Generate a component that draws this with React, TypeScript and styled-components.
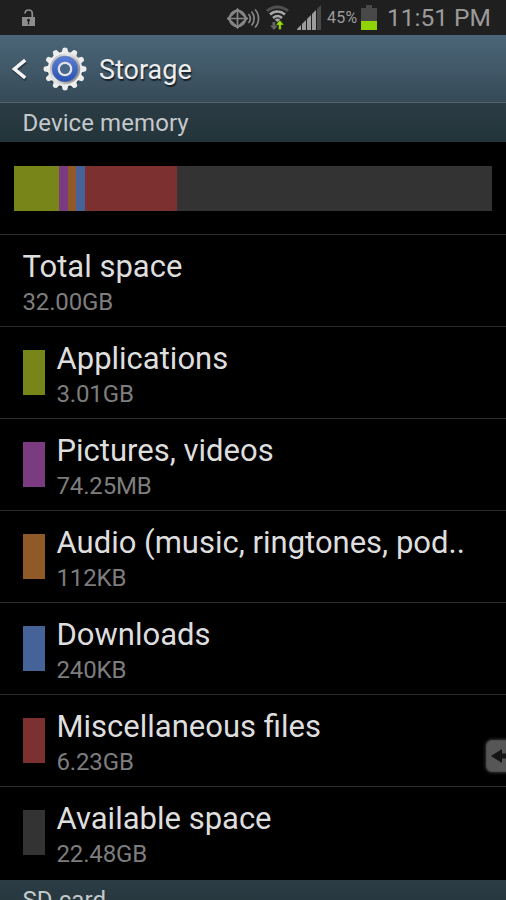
import React from 'react';
import styled, { createGlobalStyle } from 'styled-components';

const GlobalStyle = createGlobalStyle`
  * { box-sizing: border-box; }
  html, body { margin: 0; background: #000; }
  body { overflow: hidden; font-family: Roboto, 'Liberation Sans', sans-serif; }
  svg { display: block; flex: none; }
`;

const Screen = styled.main`
  position: relative;
  width: 506px;
  height: 900px;
  overflow: hidden;
  background: #000;
  display: flex;
  flex-direction: column;
`;

const StatusBar = styled.header`
  flex: none;
  height: 35px;
  padding: 0 14px 0 22px;
  background: #1f1f1f;
  display: flex;
  align-items: center;
  justify-content: space-between;
  color: #9b9b9b;
`;

const StatusIcons = styled.div`
  display: flex;
  align-items: center;
`;

const Percent = styled.span`
  width: 31px;
  margin: 1px 3px 0 5px;
  font-size: 16px;
  line-height: 20px;
  letter-spacing: 0.2px;
  white-space: nowrap;
`;

const Clock = styled.span`
  width: 105px;
  margin-left: 10px;
  font-size: 24.5px;
  line-height: 34px;
  white-space: nowrap;
`;

const WifiGap = styled.div`
  margin: 0 8px 0 6px;
`;

const TitleBar = styled.div`
  flex: none;
  height: 68px;
  padding: 2px 0 0 12px;
  display: flex;
  align-items: center;
  background: linear-gradient(#4b6678, #364a58);
  border-bottom: 1px solid #52636c;
`;

const GearGap = styled.div`
  margin-left: 15px;
`;

const Title = styled.h1`
  margin: 1px 0 0 12px;
  font-size: 27px;
  line-height: 36px;
  font-weight: 400;
  color: #ededed;
  text-shadow: 1px 2px 1px rgba(0, 0, 0, 0.6);
`;

const SectionHeader = styled.h2`
  flex: none;
  margin: 0;
  height: 39px;
  padding-left: 22.5px;
  font-size: 24px;
  line-height: 41px;
  font-weight: 400;
  letter-spacing: 0.08px;
  color: #c3c8ca;
  background: linear-gradient(#2c3c45, #22343a);
`;

const UsagePanel = styled.section`
  flex: none;
  height: 93px;
  padding: 24px 14px 0;
  border-bottom: 1px solid #2b2b2b;
`;

const UsageBar = styled.div`
  height: 45px;
  display: flex;
  background: #333;
`;

const Segment = styled.div<{ $width: number; $color: string }>`
  width: ${(p) => p.$width}px;
  background: ${(p) => p.$color};
`;

const List = styled.ul`
  flex: none;
  margin: 0;
  padding: 0;
  list-style: none;
  height: 645px;
`;

const Row = styled.li`
  height: 92px;
  padding: 14px 0 0 22.5px;
  display: flex;
  border-bottom: 1px solid #2b2b2b;
  &:last-child { border-bottom: 0; }
`;

const Swatch = styled.div<{ $color: string }>`
  width: 22.5px;
  height: 45px;
  margin: 9px 11.5px 0 0;
  background: ${(p) => p.$color};
`;

const Label = styled.div`
  font-size: 31px;
  line-height: 36px;
  white-space: nowrap;
  color: #dedede;
`;

const Value = styled.div`
  font-size: 24px;
  line-height: 34px;
  letter-spacing: -0.15px;
  color: #7d7d7d;
`;

const SideTab = styled.button`
  position: absolute;
  right: -12px;
  top: 740px;
  width: 32px;
  height: 32px;
  padding: 0 0 0 4px;
  display: flex;
  align-items: center;
  border: 1px solid #4b4b4b;
  border-radius: 6px;
  background: #565656;
  box-shadow: 0 0 3px 1px #333;
`;

const LockIcon = () => (
  <svg width="14" height="18" viewBox="0 0 14 18">
    <path d="M3 4.5C3 2.2 4.4 1 6.6 1C8.8 1 10.3 2.2 10.3 4.8V9" fill="none" stroke="#8d8d8d" strokeWidth="1.7" />
    <rect x="0" y="8" width="13" height="9" fill="#8d8d8d" />
    <circle cx="6.5" cy="11.2" r="1.4" fill="#1f1f1f" />
    <path d="M6.5 11.5V15.5" stroke="#1f1f1f" strokeWidth="1.3" />
  </svg>
);

const NfcIcon = () => (
  <svg width="33" height="24" viewBox="0 0 33 24" fill="none" stroke="#868686">
    <path d="M1 12.5L10.5 3.5L20 12.5L10.5 21.5Z" strokeWidth="2" />
    <circle cx="10.5" cy="12.5" r="8" strokeWidth="1.8" />
    <path d="M1 12.5H20M10.5 3V22" strokeWidth="1.7" />
    <path d="M21.5 8C23.8 10.7 23.8 14.3 21.5 17M24.5 5.5C28 9.5 28 15.5 24.5 19.5M28 3.5C32.7 8.5 32.7 16.5 28 21.5" strokeWidth="1.7" />
  </svg>
);

const WifiIcon = () => (
  <svg width="23" height="26" viewBox="0 0 23 26" fill="none">
    <path d="M1 6C7 0.5 16 0.5 22 6" stroke="#505050" strokeWidth="3" />
    <path d="M4 9.5C8.5 5.5 14.5 5.5 19 9.5M7 13C10 10.3 13 10.3 16 13" stroke="#a6a6a6" strokeWidth="2.5" />
    <path d="M8.7 14.5Q11.5 12.7 14.3 14.5L11.5 17.3Z" fill="#a6a6a6" />
    <path d="M6.5 17V20.5H4L8 25L12 20.5H9.3V17Z" fill="#646464" />
    <path d="M12.6 24.5V20H9.8L13.8 15L18 20H15.2V24.5Z" fill="#99dc0b" stroke="#1f1f1f" strokeWidth="0.4" />
  </svg>
);

const SignalIcon = () => (
  <svg width="25" height="25" viewBox="0 0 25 25">
    <path d="M0 25V24L4 20V25ZM5 25V19L9 15V25ZM10 25V14L14 10V25ZM15 25V9L19 5V25Z" fill="#9c9c9c" />
    <path d="M20 25V4L24 0V25Z" fill="#494949" />
  </svg>
);

const BatteryIcon = () => (
  <svg width="16" height="25" viewBox="0 0 16 25">
    <path d="M0 3H5V0H11V3H16V16H0Z" fill="#494949" />
    <rect y="16" width="16" height="9" fill="#90d300" />
  </svg>
);

const BackIcon = () => (
  <svg width="16" height="24" viewBox="0 0 16 24">
    <path d="M14 4L2.8 13L14 22" stroke="#17252e" strokeWidth="3.4" fill="none" opacity="0.6" />
    <path d="M13.2 2.2L2.4 11L13.2 19.8" stroke="#f4f4f4" strokeWidth="3.5" fill="none" />
  </svg>
);

const GearIcon = () => (
  <svg width="44" height="46" viewBox="-22 -22 44 46">
    <defs>
      <linearGradient id="metal" x1="0" y1="0" x2="1" y2="1">
        <stop offset="0" stopColor="#fff" />
        <stop offset="0.5" stopColor="#dedede" />
        <stop offset="1" stopColor="#f7f7f7" />
      </linearGradient>
      <linearGradient id="ring" x1="0" y1="0" x2="1" y2="0.5">
        <stop offset="0" stopColor="#a9a9a9" />
        <stop offset="0.5" stopColor="#e9e9e9" />
        <stop offset="1" stopColor="#979797" />
      </linearGradient>
      <linearGradient id="blue" x1="0" y1="0" x2="0" y2="1">
        <stop offset="0" stopColor="#5b80d6" />
        <stop offset="1" stopColor="#2850b0" />
      </linearGradient>
    </defs>
    <circle cy="1.5" r="18" fill="#1d2c38" opacity="0.5" />
    {Array.from({ length: 12 }, (_, i) => (
      <path key={i} d="M-3.6 -16L-2.2 -20.8Q0 -22.2 2.2 -20.8L3.6 -16Z" fill="#ededed" transform={`rotate(${i * 30})`} />
    ))}
    <circle r="17.3" fill="url(#metal)" />
    <circle r="15.2" fill="url(#ring)" />
    <circle r="13" fill="url(#blue)" stroke="#6f7c9f" strokeWidth="0.6" />
    <circle r="6.1" fill="#3b5688" stroke="#e2e2e2" strokeWidth="2.5" />
    <circle r="4.8" fill="#48668a" />
  </svg>
);

const ArrowIcon = () => (
  <svg width="22" height="14" viewBox="0 0 22 14">
    <path d="M0 7L11 0V4.5H22V9.5H11V14Z" fill="#151515" />
  </svg>
);

const segments = [
  { width: 45, color: '#778519' },
  { width: 8.5, color: '#7a3b80' },
  { width: 8.5, color: '#8f5928' },
  { width: 8.5, color: '#456398' },
  { width: 92.5, color: '#7d3030' },
];

const rows = [
  { label: 'Total space', value: '32.00GB' },
  { label: 'Applications', value: '3.01GB', color: '#778519' },
  { label: 'Pictures, videos', value: '74.25MB', color: '#7a3b80' },
  { label: 'Audio (music, ringtones, pod..', value: '112KB', color: '#8f5928' },
  { label: 'Downloads', value: '240KB', color: '#456398' },
  { label: 'Miscellaneous files', value: '6.23GB', color: '#7d3030' },
  { label: 'Available space', value: '22.48GB', color: '#333333' },
];

export default function App() {
  return (
    <>
      <GlobalStyle />
      <Screen>
        <StatusBar>
          <LockIcon />
          <StatusIcons>
            <NfcIcon />
            <WifiGap><WifiIcon /></WifiGap>
            <SignalIcon />
            <Percent>45%</Percent>
            <BatteryIcon />
            <Clock>11:51 PM</Clock>
          </StatusIcons>
        </StatusBar>
        <TitleBar>
          <BackIcon />
          <GearGap><GearIcon /></GearGap>
          <Title>Storage</Title>
        </TitleBar>
        <SectionHeader>Device memory</SectionHeader>
        <UsagePanel>
          <UsageBar>
            {segments.map((s) => (
              <Segment key={s.color} $width={s.width} $color={s.color} />
            ))}
          </UsageBar>
        </UsagePanel>
        <List>
          {rows.map((r) => (
            <Row key={r.label}>
              {r.color && <Swatch $color={r.color} />}
              <div>
                <Label>{r.label}</Label>
                <Value>{r.value}</Value>
              </div>
            </Row>
          ))}
        </List>
        <SectionHeader>SD card</SectionHeader>
        <SideTab aria-label="Open panel"><ArrowIcon /></SideTab>
      </Screen>
    </>
  );
}
